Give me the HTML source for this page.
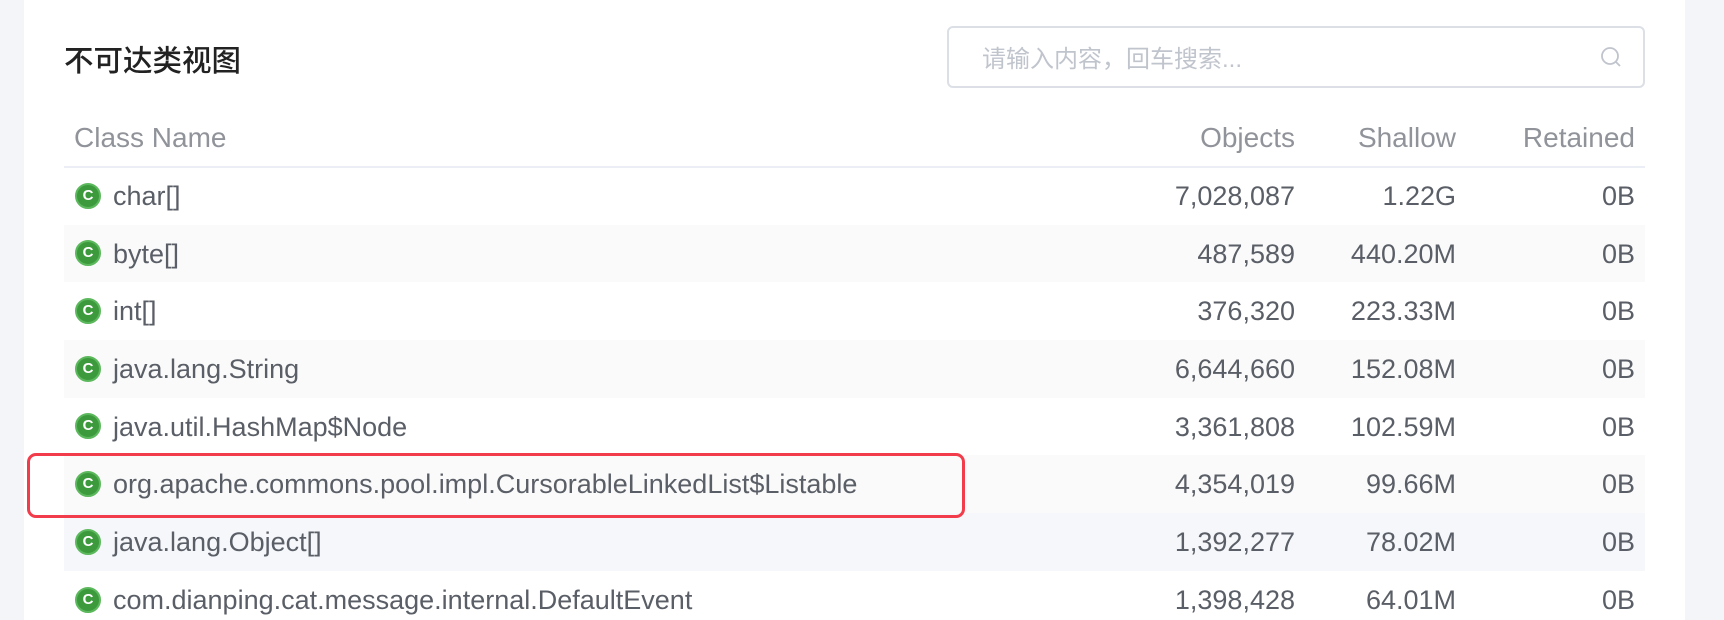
<!DOCTYPE html>
<html><head><meta charset="utf-8"><style>
*{margin:0;padding:0;box-sizing:border-box}
html,body{width:1724px;height:620px;overflow:hidden}
body{background:#f4f5f8;font-family:"Liberation Sans","Noto Sans CJK SC",sans-serif;position:relative}
.panel{position:absolute;left:24px;top:0;width:1661px;height:620px;background:#fff}
.title{position:absolute;left:64px;top:38px;font-size:29.5px;color:#222;font-weight:500}
.search{position:absolute;left:947px;top:26px;width:698px;height:62px;border:2px solid #dcdfe6;border-radius:6px}
.search span{position:absolute;left:33px;top:11px;font-size:24px;color:#c0c4cc}
.search svg{position:absolute;right:20px;top:17px}
table{position:absolute;left:64px;top:110px;width:1581px;border-collapse:collapse;table-layout:fixed}
th{height:57px;font-size:28px;font-weight:normal;color:#909399;text-align:right;border-bottom:2px solid #ebeef5;padding:0}
td{height:57.7px;font-size:27px;color:#5a5e66;text-align:right;padding:0;line-height:30px;vertical-align:middle;white-space:nowrap}
th:first-child,td:first-child{text-align:left;padding-left:10px}
.s{background:#fafafa}.h{background:#f5f7fa}
td:last-child,th:last-child{padding-right:10px}
.ic{display:inline-block;width:26px;height:26px;border-radius:50%;background:#3c9a3c;border:2px solid #5cb85c;color:#fff;font-size:15px;font-weight:bold;text-align:center;line-height:22px;vertical-align:middle;margin-top:-4px;margin-right:12px;margin-left:1px}
.red{position:absolute;left:27px;top:453px;width:938px;height:65px;border:3px solid #f23c4b;border-radius:9px}
</style></head><body>
<div class="panel"></div>
<div class="title">不可达类视图</div>
<div class="search"><span>请输入内容，回车搜索...</span>
<svg width="24" height="24" viewBox="0 0 24 24" fill="none" stroke="#c0c4cc" stroke-width="1.8"><circle cx="11" cy="11" r="8"/><path d="M17 17l4 4"/></svg></div>
<table>
<colgroup><col style="width:1071px"><col style="width:160px"><col style="width:161px"><col style="width:189px"></colgroup>
<tr><th>Class Name</th><th>Objects</th><th>Shallow</th><th>Retained</th></tr>
<tr><td><span class="ic">C</span>char[]</td><td>7,028,087</td><td>1.22G</td><td>0B</td></tr>
<tr class="s"><td><span class="ic">C</span>byte[]</td><td>487,589</td><td>440.20M</td><td>0B</td></tr>
<tr><td><span class="ic">C</span>int[]</td><td>376,320</td><td>223.33M</td><td>0B</td></tr>
<tr class="s"><td><span class="ic">C</span>java.lang.String</td><td>6,644,660</td><td>152.08M</td><td>0B</td></tr>
<tr><td><span class="ic">C</span>java.util.HashMap$Node</td><td>3,361,808</td><td>102.59M</td><td>0B</td></tr>
<tr class="s"><td><span class="ic">C</span>org.apache.commons.pool.impl.CursorableLinkedList$Listable</td><td>4,354,019</td><td>99.66M</td><td>0B</td></tr>
<tr class="h"><td><span class="ic">C</span>java.lang.Object[]</td><td>1,392,277</td><td>78.02M</td><td>0B</td></tr>
<tr><td><span class="ic">C</span>com.dianping.cat.message.internal.DefaultEvent</td><td>1,398,428</td><td>64.01M</td><td>0B</td></tr>
</table>
<div class="red"></div>
</body></html>
